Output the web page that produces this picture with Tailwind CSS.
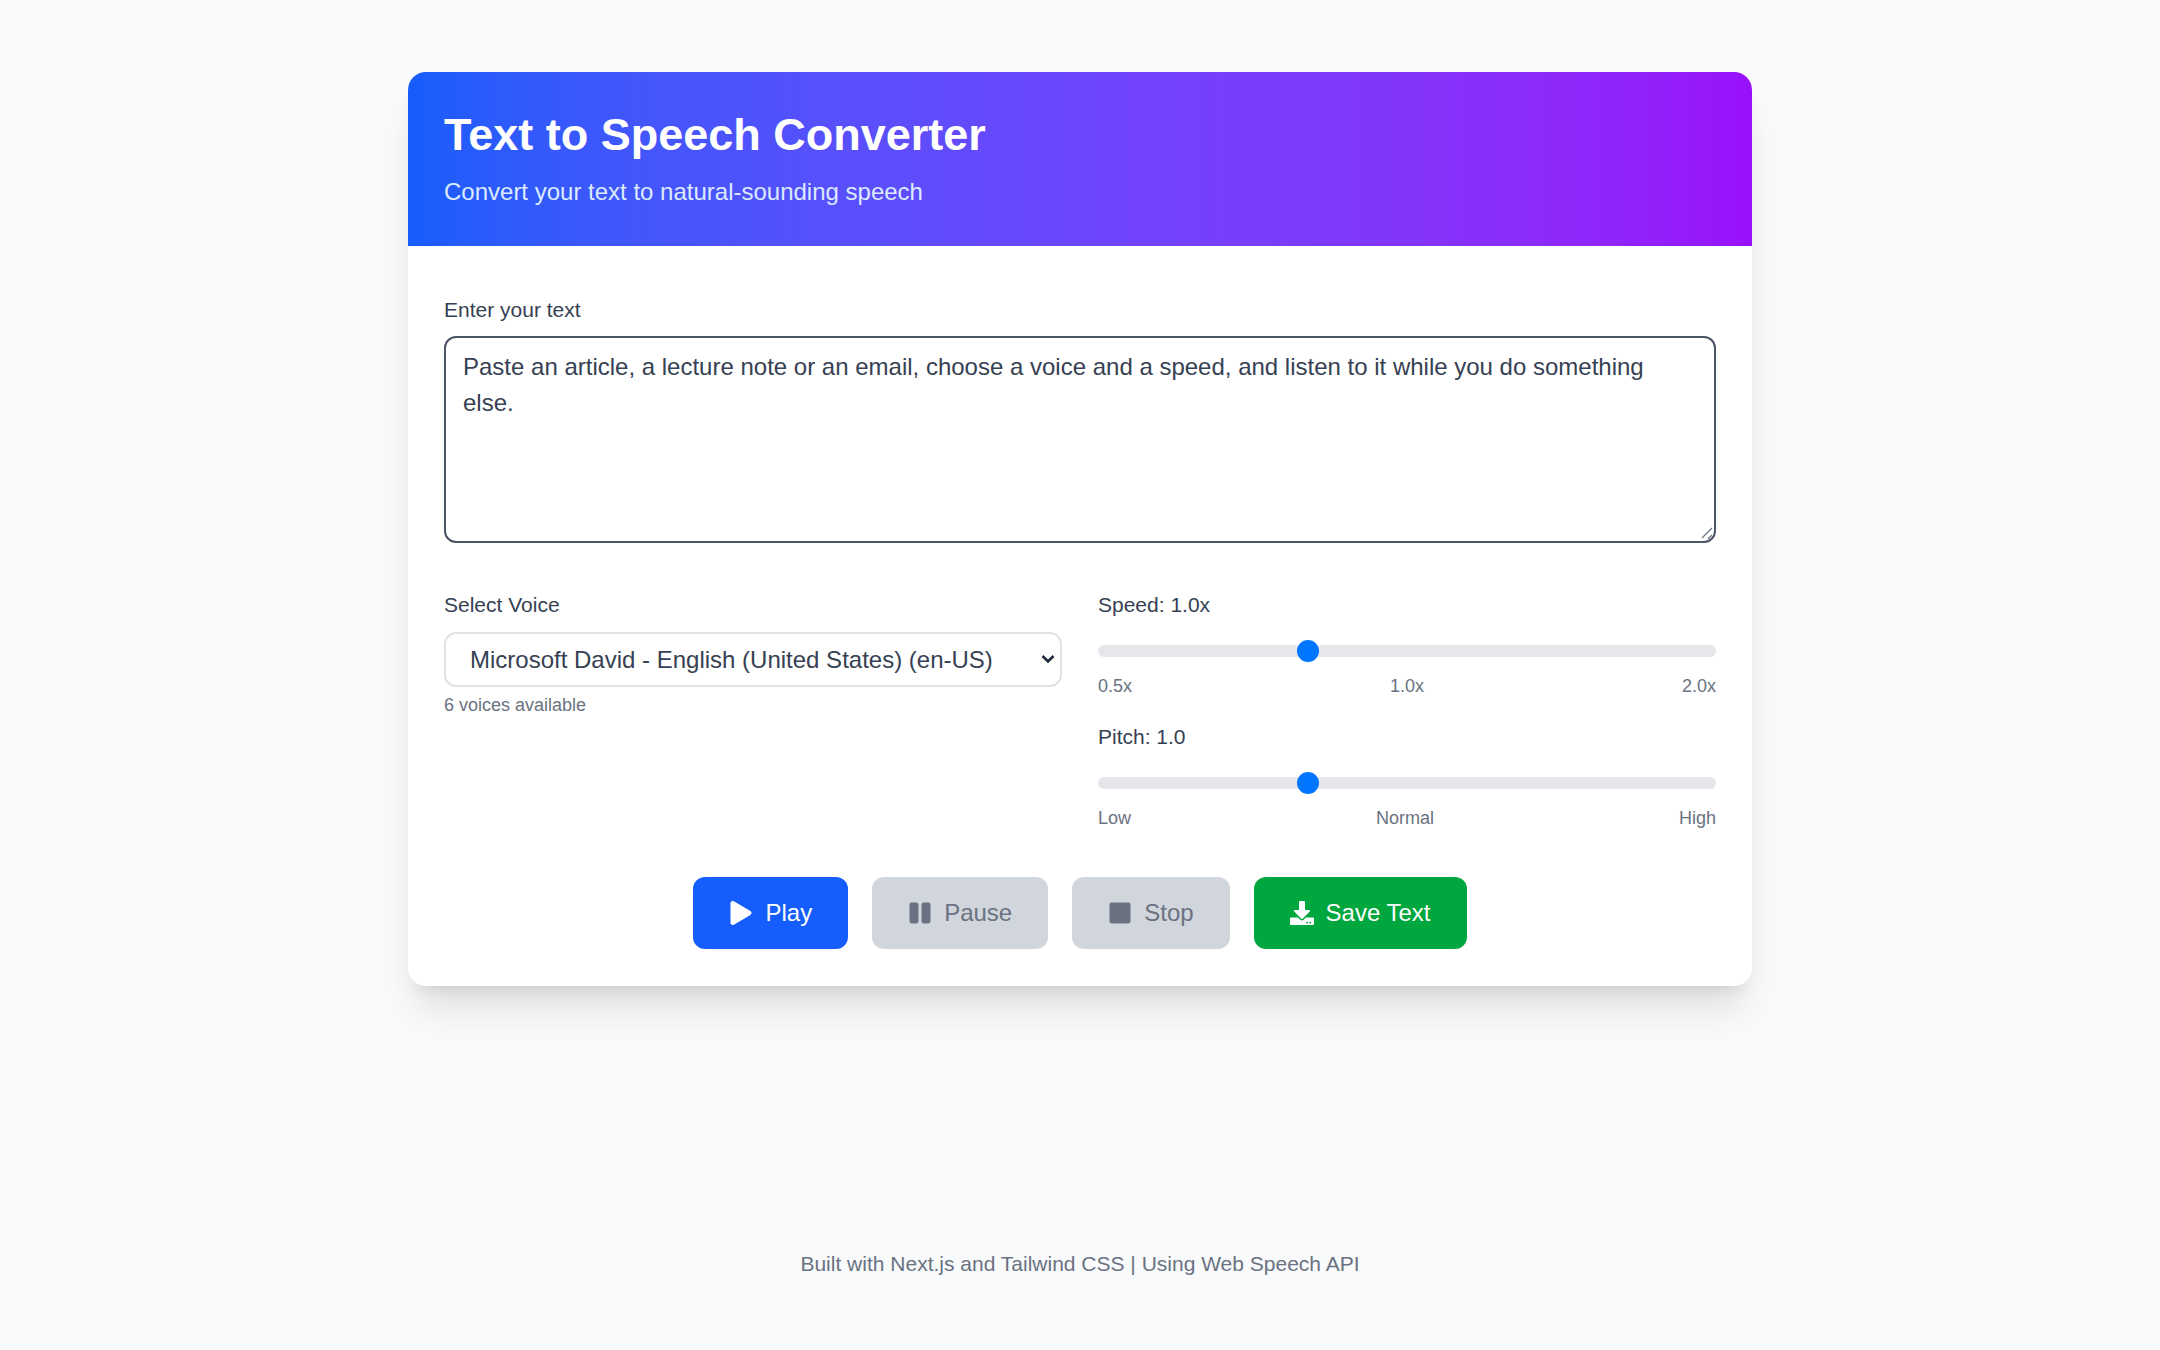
<!DOCTYPE html>
<html lang="en">
<head>
    <meta charset="UTF-8">
    <meta name="viewport" content="width=device-width, initial-scale=1.0">
    <title>Text to Speech Converter</title>
    <script src="https://cdn.jsdelivr.net/npm/@tailwindcss/browser@4"></script>
</head>
<body class="min-h-screen bg-gray-50 font-['Liberation_Sans',Arial,sans-serif] flex flex-col items-center pt-[72px] pb-[70px]">
    <main class="w-[1344px] bg-white rounded-[18px] overflow-hidden shadow-[0_30px_37.5px_-7.5px_rgb(0_0_0/0.1),0_12px_15px_-9px_rgb(0_0_0/0.1)]">
        <header class="h-[174px] px-[36px] pt-[36px] bg-gradient-to-r from-blue-600 to-purple-600">
            <h1 class="text-[45px] leading-[54px] font-bold text-white">Text to Speech Converter</h1>
            <p class="mt-[12px] text-[24px] leading-[36px] text-blue-100">Convert your text to natural-sounding speech</p>
        </header>

        <div class="px-[36px] pt-[48px] pb-[37px]">
            <label for="text" class="block mb-[10px] text-[21px] leading-[32px] text-gray-700">Enter your text</label>
            <div class="relative">
                <textarea id="text" class="block w-full h-[207px] px-[17px] py-[11px] text-[24px] leading-[36px] text-gray-700 bg-white border-2 border-gray-600 rounded-[12px] outline-none resize-none">Paste an article, a lecture note or an email, choose a voice and a speed, and listen to it while you do something else.</textarea>
                
                <svg class="absolute right-[2px] bottom-[2px] size-[14px] text-gray-500" viewBox="0 0 14 14" fill="none" stroke="currentColor" stroke-width="1.2"><path d="M2 11 12 1M8 12l4-4"/></svg>
            </div>

            <div class="grid grid-cols-2 gap-x-[36px] mt-[46px]">
                <div>
                    <label for="voice" class="block mb-[11px] text-[21px] leading-[32px] text-gray-700">Select Voice</label>
                    <div class="relative">
                        <select id="voice" class="block w-full h-[55px] pl-[24px] pr-[36px] text-[24px] text-gray-700 bg-white border-2 border-[#dfe2e7] rounded-[12px] outline-none appearance-none">
                            <option>Microsoft David - English (United States) (en-US)</option>
                        </select>
                        <svg class="absolute right-[7px] top-[22px] w-[14px] h-[10px] text-gray-800 pointer-events-none" viewBox="0 0 14 10" fill="none" stroke="currentColor" stroke-width="2.6"><path d="M1.5 2 7 7.5 12.5 2"/></svg>
                    </div>
                    <p class="mt-[5px] text-[18px] leading-[27px] text-gray-500">6 voices available</p>
                </div>
                <div>
                    <label for="rate" class="block text-[21px] leading-[32px] text-gray-700">Speed: 1.0x</label>
                    <input id="rate" type="range" min="0.5" max="2" step="0.1" value="1" class="block w-full h-[12px] mt-[24px] appearance-none rounded-full bg-gray-200 [&::-webkit-slider-thumb]:appearance-none [&::-webkit-slider-thumb]:w-[22px] [&::-webkit-slider-thumb]:h-[22px] [&::-webkit-slider-thumb]:rounded-full [&::-webkit-slider-thumb]:bg-[#0075ff]">
                    <div class="flex justify-between mt-[16px] text-[18px] leading-[27px] text-gray-500">
                        <span>0.5x</span><span>1.0x</span><span>2.0x</span>
                    </div>
                    <label for="pitch" class="block mt-[21px] text-[21px] leading-[32px] text-gray-700">Pitch: 1.0</label>
                    <input id="pitch" type="range" min="0" max="3" step="0.1" value="1" class="block w-full h-[12px] mt-[24px] appearance-none rounded-full bg-gray-200 [&::-webkit-slider-thumb]:appearance-none [&::-webkit-slider-thumb]:w-[22px] [&::-webkit-slider-thumb]:h-[22px] [&::-webkit-slider-thumb]:rounded-full [&::-webkit-slider-thumb]:bg-[#0075ff]">
                    <div class="flex justify-between mt-[16px] text-[18px] leading-[27px] text-gray-500">
                        <span>Low</span><span>Normal</span><span>High</span>
                    </div>
                </div>
            </div>

            <div class="flex justify-center gap-[24px] mt-[45px]">
                <button class="h-[72px] px-[36px] flex items-center gap-[12px] rounded-[12px] bg-blue-600 text-white text-[24px]">
                    <svg class="size-[24px]" viewBox="0 0 448 512" fill="currentColor"><path d="M424.4 214.7L72.4 6.6C43.8-10.3 0 6.1 0 47.9V464c0 37.5 40.7 60.1 72.4 41.3l352-208c31.4-18.5 31.5-64.1 0-82.6z"/></svg>
                    Play
                </button>
                <button disabled class="h-[72px] px-[36px] flex items-center gap-[12px] rounded-[12px] bg-gray-300 text-gray-500 text-[24px]">
                    <svg class="size-[24px]" viewBox="0 0 448 512" fill="currentColor"><path d="M144 479H48c-26.5 0-48-21.5-48-48V79c0-26.5 21.5-48 48-48h96c26.5 0 48 21.5 48 48v352c0 26.5-21.5 48-48 48zm304-48V79c0-26.5-21.5-48-48-48h-96c-26.5 0-48 21.5-48 48v352c0 26.5 21.5 48 48 48h96c26.5 0 48-21.5 48-48z"/></svg>
                    Pause
                </button>
                <button disabled class="h-[72px] px-[36px] flex items-center gap-[12px] rounded-[12px] bg-gray-300 text-gray-500 text-[24px]">
                    <svg class="size-[24px]" viewBox="0 0 448 512" fill="currentColor"><path d="M400 32H48C21.5 32 0 53.5 0 80v352c0 26.5 21.5 48 48 48h352c26.5 0 48-21.5 48-48V80c0-26.5-21.5-48-48-48z"/></svg>
                    Stop
                </button>
                <button class="h-[72px] px-[36px] flex items-center gap-[12px] rounded-[12px] bg-green-600 text-white text-[24px]">
                    <svg class="size-[24px]" viewBox="0 0 512 512" fill="currentColor"><path d="M216 0h80c13.3 0 24 10.7 24 24v168h87.7c17.8 0 26.7 21.5 14.1 34.1L269.7 378.3c-7.5 7.5-19.8 7.5-27.3 0L90.1 226.1c-12.6-12.6-3.7-34.1 14.1-34.1H192V24c0-13.3 10.7-24 24-24zm296 376v112c0 13.3-10.7 24-24 24H24c-13.3 0-24-10.7-24-24V376c0-13.3 10.7-24 24-24h146.7l49 49c20.1 20.1 52.5 20.1 72.6 0l49-49H488c13.3 0 24 10.7 24 24zm-124 88c0-11-9-20-20-20s-20 9-20 20 9 20 20 20 20-9 20-20zm64 0c0-11-9-20-20-20s-20 9-20 20 9 20 20 20 20-9 20-20z"/></svg>
                    Save Text
                </button>
            </div>
        </div>
    </main>

    <footer class="mt-auto text-[21px] leading-[32px] text-gray-500">Built with Next.js and Tailwind CSS | Using Web Speech API</footer>
</body>
</html>
